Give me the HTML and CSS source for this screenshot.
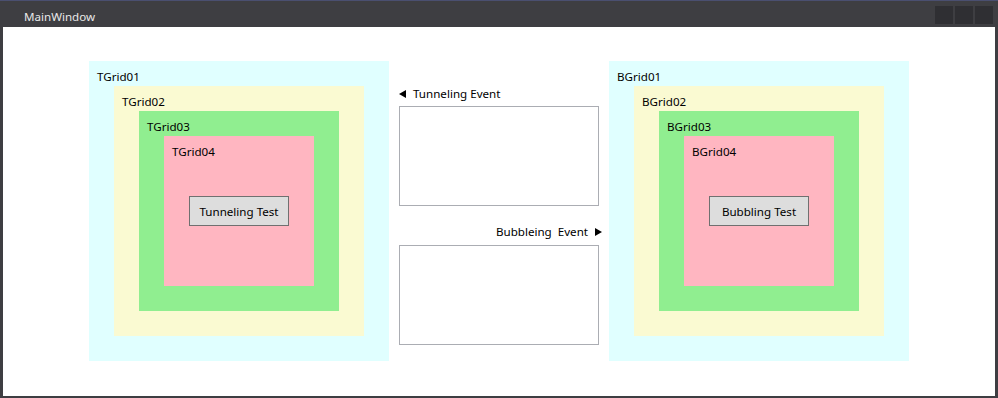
FILE: index.html
```html
<!DOCTYPE html>
<html lang="ko">
<head>
  <meta charset="UTF-8"/>
  <title>MainWindow</title>
  <link rel="stylesheet" href="styles.css">
</head>
<body>
  <div class="window">
    <div class="titlebar">
      <span class="title">MainWindow</span>
      <div class="caption-btns">
        <span class="cap-btn"></span>
        <span class="cap-btn"></span>
        <span class="cap-btn"></span>
      </div>
    </div>

    <div class="content">
      <!-- tunneling side -->
      <div class="grid g1">
        <div class="label">TGrid01</div>
        <div class="grid g2">
          <div class="label">TGrid02</div>
          <div class="grid g3">
            <div class="label">TGrid03</div>
            <div class="grid g4">
              <div class="label">TGrid04</div>
              <button class="test-btn">Tunneling Test</button>
            </div>
          </div>
        </div>
      </div>

      <div class="events">
        <div class="event-title first"><span class="tri tri-left"></span>Tunneling Event</div>
        <div class="listbox"></div>
        <div class="event-title second">Bubbleing&nbsp;&nbsp;Event<span class="tri tri-right"></span></div>
        <div class="listbox"></div>
      </div>

      <!-- bubbling side -->
      <div class="grid g1">
        <div class="label">BGrid01</div>
        <div class="grid g2">
          <div class="label">BGrid02</div>
          <div class="grid g3">
            <div class="label">BGrid03</div>
            <div class="grid g4">
              <div class="label">BGrid04</div>
              <button class="test-btn">Bubbling Test</button>
            </div>
          </div>
        </div>
      </div>
    </div>
  </div>
</body>
</html>
```

FILE: styles.css
```css
* {
  box-sizing: border-box;
  margin: 0;
  padding: 0;
}

body {
  font-family: 'Noto Sans', 'Noto Sans CJK KR', sans-serif;
  font-size: 11.6px;
  background: #3e3e42;
}

.window {
  width: 998px;
  height: 398px;
  background: #3e3e42;
  border-top: 1px solid #4a4f70;
  display: flex;
  flex-direction: column;
}

.titlebar {
  height: 26px;
  display: flex;
  align-items: flex-start;
  justify-content: space-between;
  padding: 0 5px 0 24px;
}

.title {
  color: #e8e8e8;
  font-size: 11.6px;
  line-height: 16px;
  margin-top: 8px;
}

.caption-btns {
  display: flex;
  gap: 2px;
  margin-top: 5px;
}

.cap-btn {
  width: 18px;
  height: 18px;
  background: #2f2f33;
}

.content {
  flex: 1;
  margin: 0 3px 2px 3px;
  padding-top: 34px;
  background: #fff;
  display: flex;
  justify-content: center;
  align-items: flex-start;
  gap: 10px;
}

.grid {
  display: flex;
  flex-direction: column;
  align-items: center;
  flex-shrink: 0;
}

.g1 { width: 300px; height: 300px; background: #e0ffff; }
.g2 { width: 250px; height: 250px; background: #fafad2; }
.g3 { width: 200px; height: 200px; background: #90ee90; }
.g4 { width: 150px; height: 150px; background: #ffb6c1; }

.label {
  align-self: stretch;
  height: 25px;
  padding: 8px 0 0 8px;
  line-height: 16px;
  color: #000;
}

.test-btn {
  margin-top: 35px;
  width: 100px;
  height: 30px;
  background: #dddddd;
  border: 1px solid #707070;
  font-family: inherit;
  font-size: 11.6px;
  color: #000;
}

.events {
  width: 200px;
  height: 300px;
  display: flex;
  flex-direction: column;
}

.event-title {
  display: flex;
  align-items: center;
  white-space: nowrap;
  line-height: 16px;
}

.event-title.first {
  height: 20px;
  margin-top: 25px;
  padding-bottom: 5px;
}

.event-title.second {
  height: 21px;
  margin-top: 18px;
  margin-right: -3px;
  padding-bottom: 5px;
  justify-content: flex-end;
}

.tri {
  display: inline-block;
  width: 0;
  height: 0;
  border-top: 4.5px solid transparent;
  border-bottom: 4.5px solid transparent;
}

.tri-left {
  border-right: 7px solid #000;
  margin-right: 7px;
}

.tri-right {
  border-left: 7px solid #000;
  margin-left: 7px;
}

.listbox {
  height: 100px;
  border: 1px solid #abadb3;
  background: #fff;
}
```
